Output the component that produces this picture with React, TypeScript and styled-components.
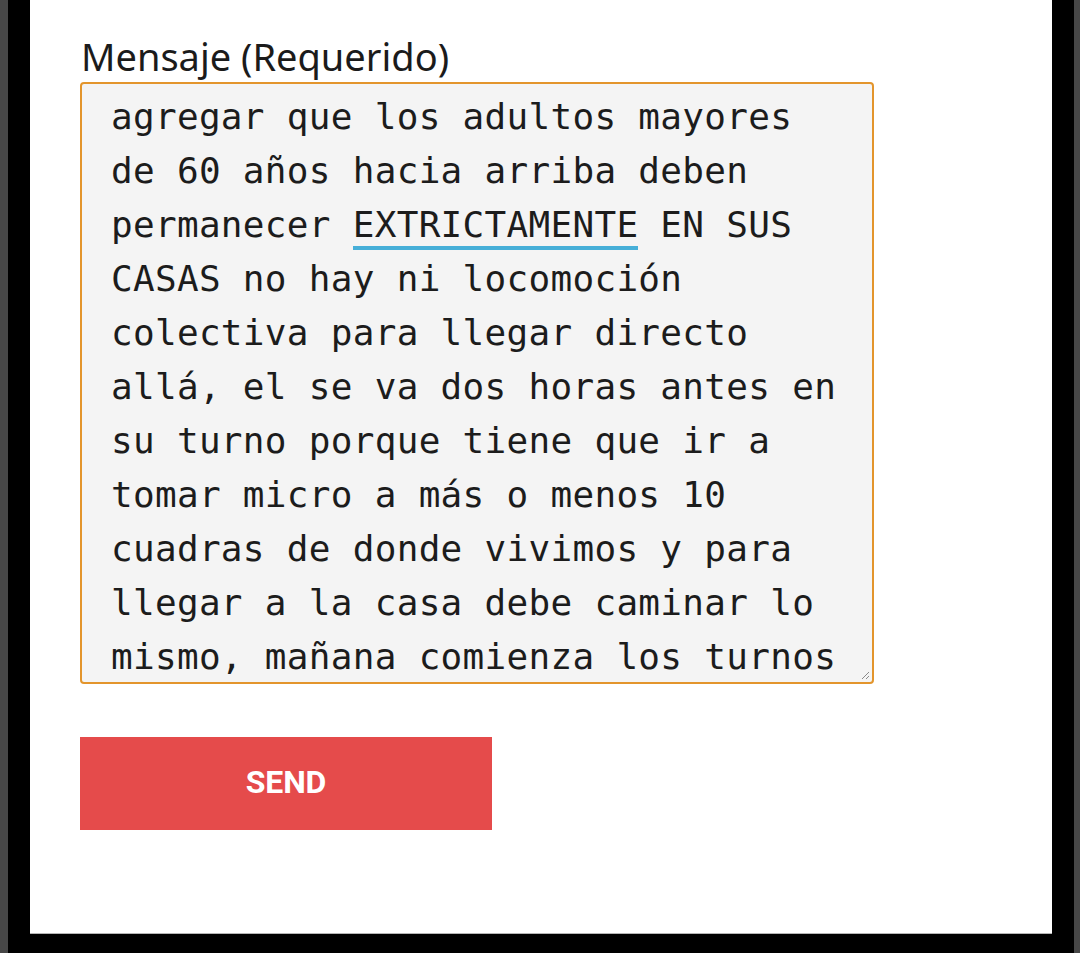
import React from "react";
import styled, { createGlobalStyle } from "styled-components";

const GlobalStyle = createGlobalStyle`
  html, body {
    margin: 0;
    padding: 0;
    background: #000;
  }
  #root {
    width: 1080px;
    height: 953px;
  }
`;

const Frame = styled.div`
  display: flex;
  width: 1080px;
  height: 953px;
  background: #000;
  overflow: hidden;
`;

const Edge = styled.div<{ $w: number }>`
  width: ${(p) => p.$w}px;
  flex-shrink: 0;
  background: #474747;
`;

const Gutter = styled.div`
  width: 22px;
  flex-shrink: 0;
`;

const Panel = styled.div`
  width: 1022px;
  height: 934px;
  flex-shrink: 0;
  box-sizing: border-box;
  background: #fff;
  border-bottom: 1px solid #b5b5b5;
  padding: 34px 0 0 50px;
  display: flex;
  flex-direction: column;
  align-items: flex-start;
`;

const Label = styled.label`
  font-family: "Noto Sans", "Open Sans", sans-serif;
  font-size: 38px;
  line-height: 44px;
  color: #1b1b1b;
  margin-left: 1px;
`;

const Field = styled.div`
  position: relative;
  box-sizing: border-box;
  width: 794px;
  height: 602px;
  margin-top: 4px;
  border: 2px solid #e3952c;
  border-radius: 4px;
  background: #f4f4f4;
  padding: 6px 20px 0 29px;
  overflow: hidden;
`;

const Line = styled.div`
  font-family: "DejaVu Sans Mono", "Liberation Mono", monospace;
  font-size: 36px;
  line-height: 54px;
  letter-spacing: 0.3px;
  color: #1c1c1c;
  white-space: pre;
`;

const Flagged = styled.span`
  border-bottom: 4px solid #47afd8;
  padding-bottom: 1px;
`;

const Grip = styled.svg`
  position: absolute;
  right: 2px;
  bottom: 2px;
  width: 9px;
  height: 9px;
`;

const SendButton = styled.button`
  margin-top: 53px;
  padding: 0 0 3px;
  width: 412px;
  height: 93px;
  border: none;
  border-radius: 0;
  background: #e54b4b;
  color: #fff;
  font-family: Roboto, "Liberation Sans", sans-serif;
  font-weight: 700;
  font-size: 32px;
  letter-spacing: -0.2px;
  cursor: pointer;
`;

const lines: React.ReactNode[] = [
  "agregar que los adultos mayores",
  "de 60 años hacia arriba deben",
  <>
    permanecer <Flagged>EXTRICTAMENTE</Flagged> EN SUS
  </>,
  "CASAS no hay ni locomoción",
  "colectiva para llegar directo",
  "allá, el se va dos horas antes en",
  "su turno porque tiene que ir a",
  "tomar micro a más o menos 10",
  "cuadras de donde vivimos y para",
  "llegar a la casa debe caminar lo",
  "mismo, mañana comienza los turnos",
];

export default function App() {
  return (
    <>
      <GlobalStyle />
      <Frame>
        <Edge $w={8} />
        <Gutter />
        <Panel>
          <Label>Mensaje (Requerido)</Label>
          <Field>
            {lines.map((l, i) => (
              <Line key={i}>{l}</Line>
            ))}
            <Grip viewBox="0 0 9 9">
              <path d="M8 1 L1 8 M8 5 L5 8" stroke="#8a8a8a" strokeWidth="1" />
            </Grip>
          </Field>
          <SendButton>SEND</SendButton>
        </Panel>
        <Gutter />
        <Edge $w={6} />
      </Frame>
    </>
  );
}
